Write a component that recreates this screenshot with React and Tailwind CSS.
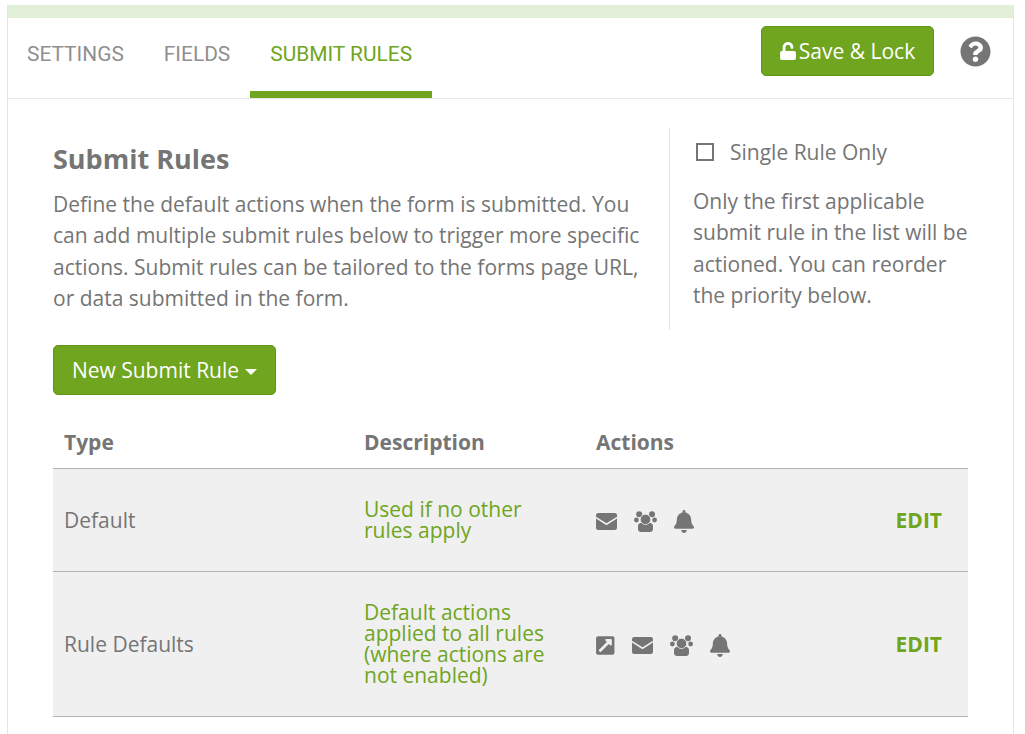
import React from "react";
import { FaBell, FaQuestionCircle, FaUnlock, FaExternalLinkSquareAlt } from "react-icons/fa";

function MailIcon({ className }) {
  return (
    <svg viewBox="0 0 21 17" className={className}>
      <rect width="21" height="17" rx="2.2" fill="currentColor" />
      <path d="M0 4.6l10.500 6.600L21 4.600" fill="none" stroke="#f0f0f0" strokeWidth="1.6" />
    </svg>
  );
}

function GroupIcon({ className }) {
  return (
    <svg viewBox="0 0 23 21" className={className} fill="currentColor">
      <circle cx="5.200" cy="3.200" r="3" />
      <circle cx="18" cy="3.200" r="3" />
      <circle cx="2.400" cy="9" r="2.400" />
      <circle cx="20.600" cy="9" r="2.400" />
      <path d="M4 15c0-2 1.500-3.300 3.500-3.300h8c2 0 3.500 1.300 3.500 3.300v3c0 1.800-1.300 3-3 3H7c-1.700 0-3-1.200-3-3z" />
      <circle cx="11.500" cy="8.400" r="5.200" stroke="#f0f0f0" strokeWidth="0.8" />
    </svg>
  );
}

function Tab({ label, active, className }) {
  return (
    <div className={"h-[80px] px-5 flex items-center border-b-[7px] text-[20.900px] font-[Roboto,sans-serif] " + (active ? "border-[#6fa51f] text-[#6fa51f] " : "border-transparent text-[#8f8f8f] ") + (className || "")}>
      {label}
    </div>
  );
}

function ActionIcons({ external }) {
  return (
    <div className="flex items-center gap-[17px] text-[#757575]">
      {external && <FaExternalLinkSquareAlt className="w-[18.500px] h-[21px]" />}
      <MailIcon className="w-[21px] h-[17px]" />
      <GroupIcon className="w-[23px] h-[21px]" />
      <FaBell className="w-[20px] h-[23px]" />
    </div>
  );
}

function Row({ type, desc, external, height }) {
  return (
    <div className={"flex items-center bg-[#f0f0f0] border-b border-[#b3b3b3] " + height}>
      <div className="w-[300px] pl-[11px] pt-[2px] text-[21px] text-[#757575]">{type}</div>
      <div className="w-[243px] pl-[11px] pr-[31px] text-[21px] leading-[21px] text-[#6fa51f]">{desc}</div>
      <div className="flex-1 pt-[2px]"><ActionIcons external={external} /></div>
      <div className="pr-[26px] pt-[2px] text-[21px] font-bold text-[#6fa51f]">EDIT</div>
    </div>
  );
}

export default function App() {
  return (
    <div className="h-[734px] overflow-hidden bg-white pt-[5px] pl-[7px] pr-[11px] font-['Open_Sans',sans-serif]">
      <div className="h-[800px] border-x border-[#e6e6e6]">
        <div className="h-[13px] bg-[#e2efd8]" />
        <div className="flex items-center border-b border-[#e6e6e6] pr-[22px]">
          <Tab label="SETTINGS" className="pl-[19px]" />
          <Tab label="FIELDS" />
          <Tab label="SUBMIT RULES" active />
          <div className="flex-1" />
          <button className="h-[50px] w-[173px] mr-[26px] mb-[14px] pt-[2px] flex items-center justify-center gap-[3px] rounded-[5px] border border-[#5f9416] bg-[#6fa51f] text-[21px] text-white">
            <FaUnlock className="w-[16px] h-[18px] mb-[3px]" />
            Save &amp; Lock
          </button>
          <FaQuestionCircle className="w-[31px] h-[31px] text-[#757575] mb-[14px]" />
        </div>

        <div className="pl-[45px] pr-[45px] pt-[29px]">
          <div className="flex h-[202px]">
            <div className="w-[616px] pt-[13px] pr-[24px]">
              <h1 className="text-[27px] leading-[36px] font-bold text-[#757575]">Submit Rules</h1>
              <p className="mt-[12px] text-[21px] leading-[31.400px] text-[#757575]">
                Define the default actions when the form is submitted. You can add multiple submit rules below to trigger more specific actions. Submit rules can be tailored to the forms page URL, or data submitted in the form.
              </p>
            </div>
            <div className="flex-1 border-l border-[#e6e6e6] pl-[23px] text-[21px] text-[#757575]">
              <label className="flex items-center h-[50px] pb-[2px]">
                <span className="ml-[3px] w-[18px] h-[18px] border-2 border-[#757575] bg-white" />
                <span className="ml-[16px] mt-[2px]">Single Rule Only</span>
              </label>
              <p className="mt-[8px] leading-[31.400px]">
                Only the first applicable submit rule in the list will be actioned. You can reorder the priority below.
              </p>
            </div>
          </div>

          <button className="mt-[15px] h-[50px] w-[223px] pt-[2px] flex items-center justify-center rounded-[5px] border border-[#5f9416] bg-[#6fa51f] text-[21px] text-white">
            New Submit Rule
            <span className="ml-[6px] mt-[2px] border-x-[6px] border-t-[6px] border-x-transparent border-t-white" />
          </button>

          <div className="mt-[24px] flex h-[50px] pb-[2px] items-center border-b border-[#b3b3b3] text-[21px] font-bold text-[#757575]">
            <div className="w-[300px] pl-[11px]">Type</div>
            <div className="w-[243px] pl-[11px]">Description</div>
            <div className="flex-1">Actions</div>
          </div>
          <Row type="Default" desc="Used if no other rules apply" height="h-[103px]" />
          <Row type="Rule Defaults" desc="Default actions applied to all rules (where actions are not enabled)" external height="h-[145px]" />
        </div>
      </div>
    </div>
  );
}
